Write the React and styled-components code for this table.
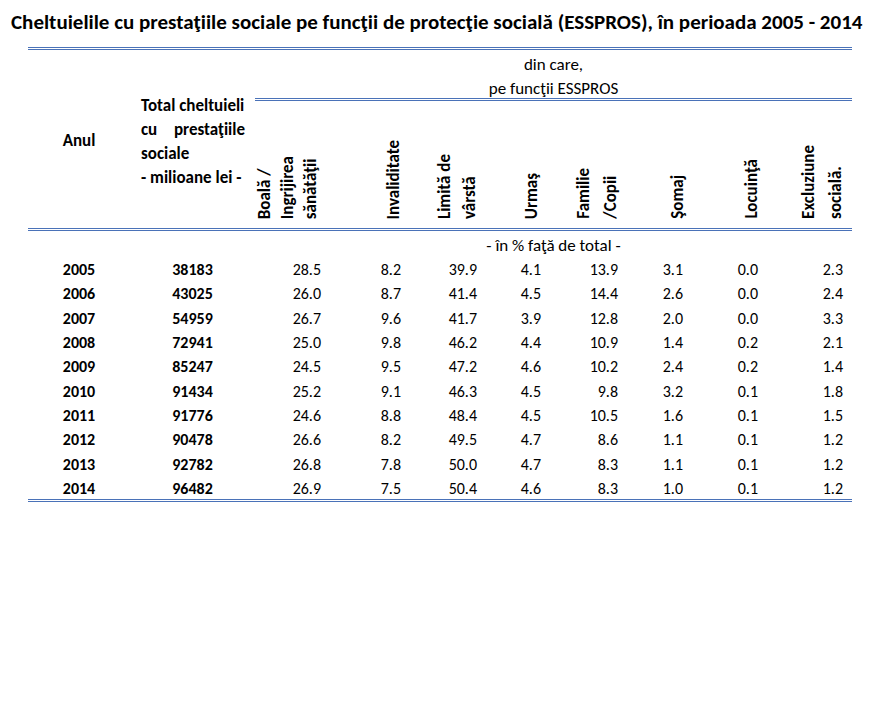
import React from "react";
import styled, { createGlobalStyle } from "styled-components";

const LINE = "#4a72b8";
const COLS = "102px 125px 75px 80px 76px 64px 77px 65px 75px 85px";

const GlobalStyle = createGlobalStyle`
  body {
    margin: 0;
    background: #fff;
    color: #000;
    font-family: Carlito, Lato, "Open Sans", sans-serif;
  }
`;

const Page = styled.div`
  width: 888px;
  height: 702px;
  padding-top: 10px;
  box-sizing: border-box;
`;

const Title = styled.h1`
  margin: 0 0 13px 11px;
  font-size: 21px;
  font-weight: 700;
  line-height: 24px;
  white-space: nowrap;
`;

const Table = styled.div`
  margin-left: 28px;
  width: 824px;
  border-bottom: 3px double ${LINE};
`;

const Head = styled.div`
  display: grid;
  grid-template-columns: ${COLS};
  grid-template-rows: 51px 127px;
  border-top: 3px double ${LINE};
  border-bottom: 3px double ${LINE};
`;

const SpanCell = styled.div`
  grid-row: 1 / 3;
  display: flex;
  flex-direction: column;
  justify-content: center;
  font-size: 17px;
  font-weight: 700;
  line-height: 24px;
`;

const YearHead = styled(SpanCell)`
  align-items: center;
  padding-top: 4px;
`;

const TotalHead = styled(SpanCell)`
  padding: 6px 10px 0 11px;
`;

const Justified = styled.div`
  display: flex;
  justify-content: space-between;
`;

const Group = styled.div`
  grid-column: 3 / -1;
  box-sizing: border-box;
  padding-top: 3px;
  border-bottom: 3px double ${LINE};
  display: flex;
  flex-direction: column;
  align-items: center;
  font-size: 17px;
  line-height: 24px;
`;

const RotCell = styled.div`
  display: flex;
  justify-content: flex-end;
  align-items: flex-end;
  padding: 0 ${(p) => p.$pad}px 9px 0;
`;

const RotText = styled.span`
  writing-mode: vertical-rl;
  transform: rotate(180deg);
  font-size: 17px;
  font-weight: 700;
  line-height: ${(p) => p.$lh}px;
  white-space: nowrap;
`;

const Row = styled.div`
  display: grid;
  grid-template-columns: ${COLS};
  height: 24.33px;
  padding-top: 4px;
  box-sizing: border-box;
  align-items: center;
  font-size: 16px;
`;

const Note = styled.div`
  grid-column: 3 / -1;
  text-align: center;
  font-size: 17px;
`;

const Key = styled.div`
  text-align: center;
  font-weight: 700;
`;

const Val = styled.div`
  text-align: right;
  padding-right: 9px;
`;

const funcs = [
  { lines: ["Boală /", "Ingrijirea", "sănătăţii"], pad: 8, lh: 23 },
  { lines: ["Invaliditate"], pad: 4, lh: 25 },
  { lines: ["Limită de", "vârstă"], pad: 4, lh: 25 },
  { lines: ["Urmaş"], pad: 6, lh: 25 },
  { lines: ["Familie", "/Copii"], pad: 3, lh: 27 },
  { lines: ["Şomaj"], pad: 2, lh: 25 },
  { lines: ["Locuinţă"], pad: 3, lh: 25 },
  { lines: ["Excluziune", "socială."], pad: 3, lh: 27 },
];

const data = [
  ["2005", "38183", "28.5", "8.2", "39.9", "4.1", "13.9", "3.1", "0.0", "2.3"],
  ["2006", "43025", "26.0", "8.7", "41.4", "4.5", "14.4", "2.6", "0.0", "2.4"],
  ["2007", "54959", "26.7", "9.6", "41.7", "3.9", "12.8", "2.0", "0.0", "3.3"],
  ["2008", "72941", "25.0", "9.8", "46.2", "4.4", "10.9", "1.4", "0.2", "2.1"],
  ["2009", "85247", "24.5", "9.5", "47.2", "4.6", "10.2", "2.4", "0.2", "1.4"],
  ["2010", "91434", "25.2", "9.1", "46.3", "4.5", "9.8", "3.2", "0.1", "1.8"],
  ["2011", "91776", "24.6", "8.8", "48.4", "4.5", "10.5", "1.6", "0.1", "1.5"],
  ["2012", "90478", "26.6", "8.2", "49.5", "4.7", "8.6", "1.1", "0.1", "1.2"],
  ["2013", "92782", "26.8", "7.8", "50.0", "4.7", "8.3", "1.1", "0.1", "1.2"],
  ["2014", "96482", "26.9", "7.5", "50.4", "4.6", "8.3", "1.0", "0.1", "1.2"],
];

export default function App() {
  return (
    <Page>
      <GlobalStyle />
      <Title>
        Cheltuielile cu prestaţiile sociale pe funcţii de protecţie socială
        (ESSPROS), în perioada 2005 - 2014
      </Title>
      <Table>
        <Head>
          <YearHead>Anul</YearHead>
          <TotalHead>
            <div>Total cheltuieli</div>
            <Justified>
              <span>cu</span>
              <span>prestaţiile</span>
            </Justified>
            <div>sociale</div>
            <div>- milioane lei -</div>
          </TotalHead>
          <Group>
            <div>din care,</div>
            <div>pe funcţii ESSPROS</div>
          </Group>
          {funcs.map((f, i) => (
            <RotCell key={i} $pad={f.pad}>
              <RotText $lh={f.lh}>
                {f.lines.map((l, j) => (
                  <React.Fragment key={j}>
                    {j > 0 && <br />}
                    {l}
                  </React.Fragment>
                ))}
              </RotText>
            </RotCell>
          ))}
        </Head>
        <Row>
          <div />
          <div />
          <Note>- în % faţă de total -</Note>
        </Row>
        {data.map((r) => (
          <Row key={r[0]}>
            <Key>{r[0]}</Key>
            <Key>{r[1]}</Key>
            {r.slice(2).map((v, i) => (
              <Val key={i}>{v}</Val>
            ))}
          </Row>
        ))}
      </Table>
    </Page>
  );
}
